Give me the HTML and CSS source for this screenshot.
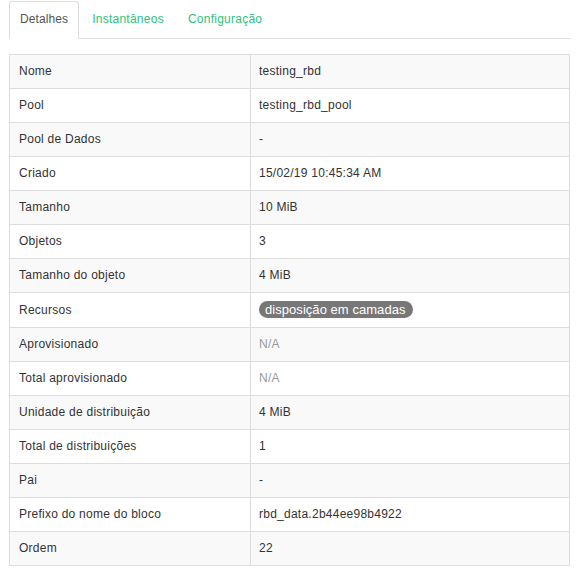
FILE: index.html
```html
<!DOCTYPE html>
<html>
<head>
<meta charset="utf-8">
<link rel="stylesheet" href="styles.css">
</head>
<body>
<div class="wrap">
  <ul class="tabs">
    <li class="tab active">Detalhes</li>
    <li class="tab">Instantâneos</li>
    <li class="tab">Configuração</li>
  </ul>
  <table class="details">
    <tr><td class="key">Nome</td><td>testing_rbd</td></tr>
    <tr><td class="key">Pool</td><td>testing_rbd_pool</td></tr>
    <tr><td class="key">Pool de Dados</td><td>-</td></tr>
    <tr><td class="key">Criado</td><td>15/02/19 10:45:34 AM</td></tr>
    <tr><td class="key">Tamanho</td><td>10 MiB</td></tr>
    <tr><td class="key">Objetos</td><td>3</td></tr>
    <tr><td class="key">Tamanho do objeto</td><td>4 MiB</td></tr>
    <tr><td class="key">Recursos</td><td><span class="badge">disposição em camadas</span></td></tr>
    <tr><td class="key">Aprovisionado</td><td class="muted">N/A</td></tr>
    <tr><td class="key">Total aprovisionado</td><td class="muted">N/A</td></tr>
    <tr><td class="key">Unidade de distribuição</td><td>4 MiB</td></tr>
    <tr><td class="key">Total de distribuições</td><td>1</td></tr>
    <tr><td class="key">Pai</td><td>-</td></tr>
    <tr><td class="key">Prefixo do nome do bloco</td><td>rbd_data.2b44ee98b4922</td></tr>
    <tr><td class="key">Ordem</td><td>22</td></tr>
  </table>
</div>
<div class="footer-line"></div>
</body>
</html>
```
FILE: styles.css
```css
html, body {
  margin: 0;
  padding: 0;
  background: #fff;
  font-family: "Liberation Sans", Arial, sans-serif;
  font-size: 12px;
  line-height: 17px;
  letter-spacing: 0.25px;
  color: #333;
}
.wrap {
  margin-left: 9px;
  width: 561px;
  padding-top: 1px;
}
.tabs {
  list-style: none;
  margin: 0;
  padding: 0;
  display: flex;
  border-bottom: 1px solid #ddd;
}
.tab {
  padding: 9px 10px 10px;
  margin-right: 2px;
  margin-bottom: -1px;
  border: 1px solid transparent;
  border-radius: 3px 3px 0 0;
  color: #2ec27e;
}
.tab.active {
  color: #555;
  border-color: #ddd #ddd transparent;
  background: #fff;
  letter-spacing: 0.1px;
}
.details {
  margin-top: 15px;
  width: 561px;
  border-collapse: collapse;
  border: 1px solid #ddd;
}
.details td {
  border: 1px solid #ddd;
  padding: 8px 9px 8px 8px;
  vertical-align: middle;
  height: 17px;
}
.details td.key {
  width: 222px;
  padding-left: 9px;
  padding-right: 9px;
}
.details tr:nth-child(odd) td {
  background: #f9f9f9;
}
.muted {
  color: #999;
}
.badge {
  display: inline-block;
  background: #777;
  color: #fff;
  border-radius: 10px;
  padding: 0 7px 0 6px;
  font-size: 13px;
  letter-spacing: 0.05px;
  line-height: 17px;
}
.footer-line {
  margin-top: 21px;
  border-top: 1px solid #eee;
}
```
